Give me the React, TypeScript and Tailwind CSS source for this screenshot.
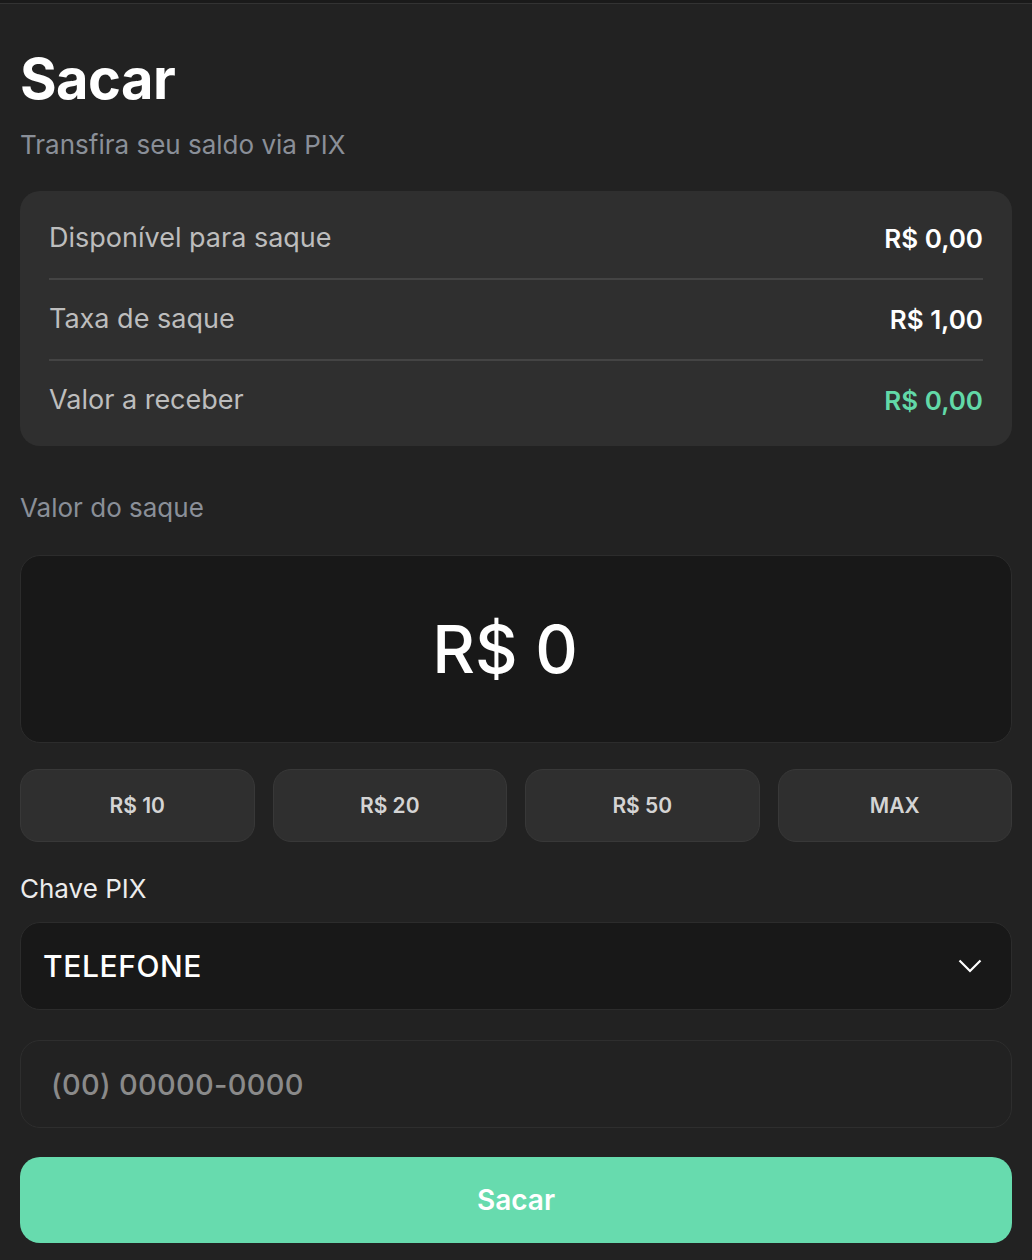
import React, { useState } from 'react';

const font = { fontFamily: 'Inter, "Noto Sans", sans-serif' };

const rows = [
  { label: 'Disponível para saque', value: 'R$ 0,00', accent: false },
  { label: 'Taxa de saque', value: 'R$ 1,00', accent: false },
  { label: 'Valor a receber', value: 'R$ 0,00', accent: true },
];

const quick = ['R$ 10', 'R$ 20', 'R$ 50', 'MAX'];

export default function App() {
  const [phone, setPhone] = useState('');

  return (
    <div className="min-h-screen bg-[#222222] text-white" style={font}>
      {/* top edge of the sheet */}
      <div className="h-[4px] bg-[#1a1a1a] border-b border-[#333333]" />

      <div className="px-[20px] pt-[47px] pb-[17px]">
        <h1 className="text-[56px] leading-none font-bold tracking-[-0.01em]">Sacar</h1>
        <p className="mt-[23px] text-[26px] leading-[30px] text-[#8a8f98]">Transfira seu saldo via PIX</p>

        {/* resumo */}
        <div className="mt-[31px] rounded-[20px] bg-[#2f2f2f] px-[29px] pt-[7px] pb-[6px]">
          {rows.map((r, i) => (
            <div
              key={r.label}
              className={`flex h-[80px] items-center justify-between ${i > 0 ? 'border-t-2 border-[#444444] h-[81px]' : ''}`}
            >
              <span className="text-[27px] text-[#bdbdbd]">{r.label}</span>
              <span className={`text-[26px] font-semibold ${r.accent ? 'text-[#62d9a8]' : 'text-white'}`}>{r.value}</span>
            </div>
          ))}
        </div>

        <p className="mt-[47px] text-[26px] leading-[30px] text-[#8a8f98]">Valor do saque</p>

        <div className="mt-[32px] flex h-[188px] items-center justify-center rounded-[20px] border border-[#2c2c2c] bg-[#181818] pr-[22px]">
          <span className="text-[66px] font-medium leading-none">R$ 0</span>
        </div>

        <div className="mt-[26px] grid grid-cols-4 gap-[18px]">
          {quick.map((q) => (
            <button
              key={q}
              className="flex h-[73px] items-center justify-center rounded-[18px] border border-[#383838] bg-[#2f2f2f] text-[21px] font-semibold text-[#d4d4d4]"
            >
              {q}
            </button>
          ))}
        </div>

        <p className="mt-[32px] text-[26px] leading-[30px] text-[#ececec]">Chave PIX</p>

        <div className="mt-[18px] flex h-[88px] items-center justify-between rounded-[20px] border border-[#2c2c2c] bg-[#181818] pl-[22px] pr-[29px]">
          <span className="text-[30px] font-medium tracking-[0.02em]">TELEFONE</span>
          <svg width="24" height="14" viewBox="0 0 24 14" fill="none">
            <polyline points="1.5,1.5 12,12 22.5,1.5" stroke="white" strokeWidth="2.2" />
          </svg>
        </div>

        <input
          value={phone}
          onChange={(e) => setPhone(e.target.value)}
          placeholder="(00) 00000-0000"
          className="mt-[30px] block h-[88px] w-full rounded-[20px] border border-[#2e2e2e] bg-[#222222] px-[30px] text-[29px] font-medium tracking-[0.01em] text-white outline-none placeholder:text-[#8a8a8a]"
        />

        <button className="mt-[29px] flex h-[86px] w-full items-center justify-center rounded-[20px] bg-[#67dbae] text-[28px] font-semibold text-white">
          Sacar
        </button>
      </div>
    </div>
  );
}
